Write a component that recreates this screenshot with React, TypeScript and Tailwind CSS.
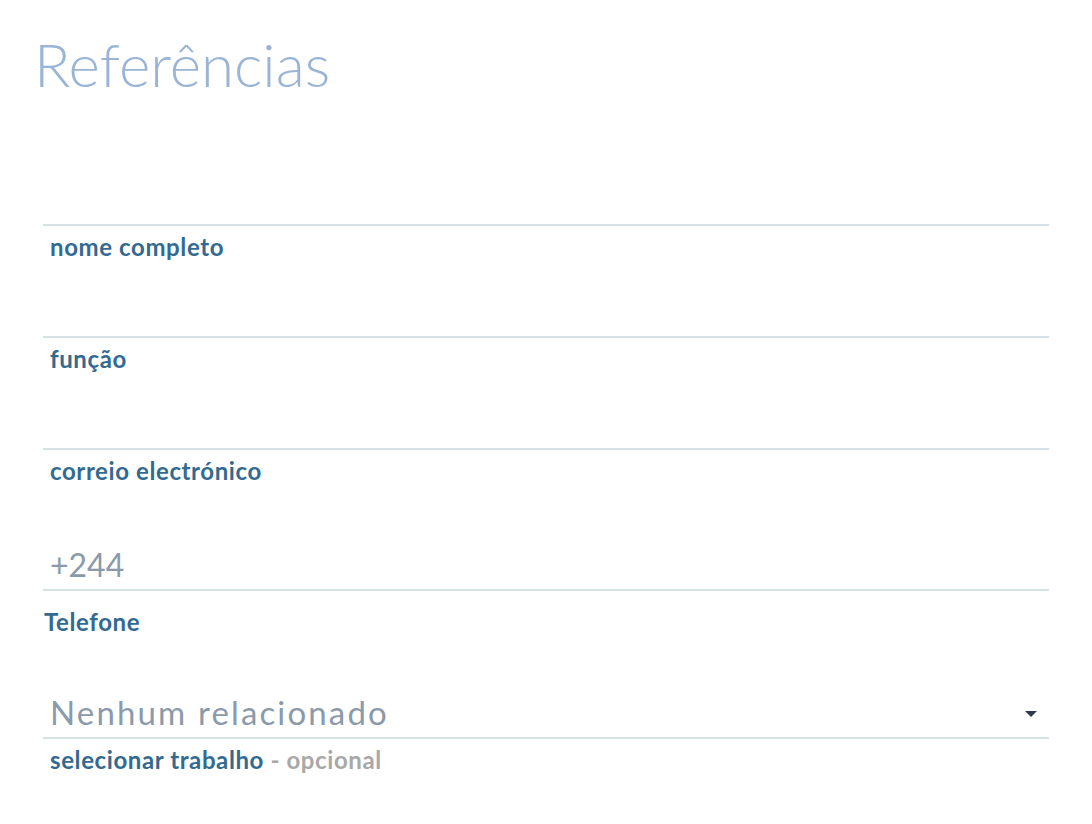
const font = { fontFamily: 'Lato, "Open Sans", sans-serif' }

const labelCls = 'pl-[7px] text-[24px] font-bold leading-[30px] tracking-[0.025em] text-[#336a91]'

function Field({ label, value, optional, hint, select }: { label: string; value?: string; optional?: boolean; hint?: boolean; select?: boolean }) {
  return (
    <div className="flex flex-col">
      <div className="flex h-[52px] items-end justify-between pl-[7px] pr-[12px] pb-[8px]">
        <span className={`text-[#8a9aab] ${select ? 'text-[33px] tracking-[0.065em]' : 'text-[32px]'} leading-none`}>
          {value}
        </span>
        {select && <span className="mb-[12px] h-0 w-0 border-x-[6px] border-t-[6px] border-x-transparent border-t-[#2d3a52]" />}
      </div>
      <div className="h-[2px] bg-[#d6e1e6]" />
      <div className={`${hint ? 'pt-[16px] pl-[1px]' : 'pt-[6px] pl-[7px]'} text-[24px] font-bold leading-[30px] tracking-[0.025em] text-[#336a91]`}>
        {label}
        {optional && <span className="text-[#a8a8a8]"> - opcional</span>}
      </div>
    </div>
  )
}

export default function App() {
  return (
    <div className="min-h-screen bg-white" style={font}>
      <h1 className="pl-[34px] pt-[28px] text-[60px] font-light leading-[72px] text-[#9ab4d6]">Referências</h1>
      <div className="mx-[43px] mt-[124px] flex flex-col">
        <div className="h-[2px] bg-[#d6e1e6]" />
        <div className={`pt-[6px] ${labelCls}`}>nome completo</div>
        <div className="mt-[74px] h-[2px] bg-[#d6e1e6]" />
        <div className={`pt-[6px] ${labelCls}`}>função</div>
        <div className="mt-[74px] h-[2px] bg-[#d6e1e6]" />
        <div className={`pt-[6px] ${labelCls}`}>correio electrónico</div>
        <div className="mt-[51px]" />
        <Field label="Telefone" value="+244" hint />
        <div className="mt-[48px]" />
        <Field label="selecionar trabalho" value="Nenhum relacionado" optional select />
      </div>
    </div>
  )
}
